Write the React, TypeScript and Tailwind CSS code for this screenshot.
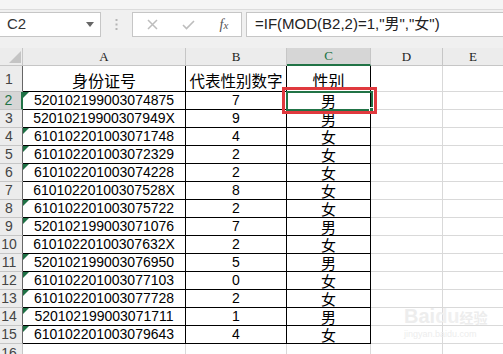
import React from "react";

const rows: [string, number, string, boolean][] = [
  ["520102199003074875", 7, "男", true],
  ["52010219900307949X", 9, "男", false],
  ["610102201003071748", 4, "女", true],
  ["610102201003072329", 2, "女", true],
  ["610102201003074228", 2, "女", true],
  ["61010220100307528X", 8, "女", false],
  ["610102201003075722", 2, "女", true],
  ["520102199003071076", 7, "男", true],
  ["61010220100307632X", 2, "女", false],
  ["520102199003076950", 5, "男", true],
  ["610102201003077103", 0, "女", true],
  ["610102201003077728", 2, "女", true],
  ["520102199003071711", 1, "男", true],
  ["610102201003079643", 4, "女", true],
];

const cjk = { fontFamily: '"Noto Sans CJK SC", sans-serif' };
const serif = { fontFamily: '"Liberation Serif", serif' };
const sans = { fontFamily: '"Liberation Sans", "Noto Sans CJK SC", sans-serif' };

export default function App() {
  return (
    <div className="relative w-[503px] h-[354px] overflow-hidden bg-white select-none">
      {/* toolbar */}
      <div className="h-[48px] bg-[#f0f0f0] flex flex-col">
        <div className="h-[10px] bg-[#f5f5f5] border-b border-[#dcdcdc]"></div>
        <div className="flex items-start pt-[2px] h-[38px]">
          <div className="w-[101px] h-[25px] bg-white border border-l-0 border-[#c6c6c6] flex items-center justify-between pl-[7px] pr-[6px]">
            <span className="text-[15px] text-[#333]" style={sans}>C2</span>
            <svg width="8" height="5" viewBox="0 0 8 5"><path d="M0 0 L8 0 L4 5 Z" fill="#666" /></svg>
          </div>
          <div className="w-[31px] h-[25px] flex items-center justify-center">
            <svg width="3" height="11" viewBox="0 0 3 11">
              <rect x="0.5" y="0" width="2" height="2" fill="#b5b5b5" />
              <rect x="0.5" y="4.5" width="2" height="2" fill="#b5b5b5" />
              <rect x="0.5" y="9" width="2" height="2" fill="#b5b5b5" />
            </svg>
          </div>
          <div className="w-[110px] h-[25px] bg-white border border-[#c6c6c6] flex items-center">
            <div className="w-[37px] flex justify-center pl-[1px]">
              <svg width="11" height="11" viewBox="0 0 11 11"><path d="M1 1 L10 10 M10 1 L1 10" stroke="#bdbdbd" strokeWidth="1.5" /></svg>
            </div>
            <div className="w-[37px] flex justify-center">
              <svg width="13" height="10" viewBox="0 0 13 10"><path d="M1 5 L4.5 8.5 L12 1" stroke="#bdbdbd" strokeWidth="1.6" fill="none" /></svg>
            </div>
            <div className="w-[34px] flex justify-center">
              <span className="text-[14px] italic text-[#555]" style={serif}>f<span className="text-[11px]">x</span></span>
            </div>
          </div>
          <div className="ml-[4px] flex-1 h-[25px] bg-white border border-r-0 border-[#c6c6c6] flex items-center pl-[8px]">
            <span className="text-[15px] text-[#222]" style={sans}>=IF(MOD(B2,2)=1,"男","女")</span>
          </div>
        </div>
      </div>

      {/* column headers */}
      <div className="flex h-[18px] bg-[#ececec] text-[13px] text-[#222]" style={serif}>
        <div className="w-[23px] border-r border-b border-[#c6c6c6] flex items-end justify-end pr-[1px] pb-[2px]">
          <svg width="12" height="12" viewBox="0 0 12 12"><path d="M12 0 L12 12 L0 12 Z" fill="#c4c4c4" /></svg>
        </div>
        <div className="w-[163px] border-r border-b border-[#c6c6c6] flex items-center justify-center">A</div>
        <div className="w-[101px] border-r border-b border-[#c6c6c6] flex items-center justify-center">B</div>
        <div className="w-[84px] border-r border-[#c6c6c6] border-b-2 border-b-[#217346] bg-[#d6d6d6] flex items-center justify-center text-[#217346]">C</div>
        <div className="w-[72px] border-r border-b border-[#c6c6c6] flex items-center justify-center">D</div>
        <div className="flex-1 border-b border-[#c6c6c6] flex items-center justify-center">E</div>
      </div>

      {/* row 1 */}
      <div className="flex h-[26px]">
        <div className="w-[23px] bg-[#ececec] border-r border-r-[#666] border-b border-b-[#c6c6c6] flex items-end justify-center pr-[4px] pb-[1px] text-[14px] text-[#444]" style={sans}>1</div>
        <div className="w-[163px] border-r border-b border-black flex items-end justify-center text-[16px] leading-[22px] text-black" style={cjk}>身份证号</div>
        <div className="w-[101px] border-r border-b border-black flex items-end justify-center text-[15.5px] leading-[22px] text-black" style={cjk}>代表性别数字</div>
        <div className="w-[84px] border-r border-b border-black flex items-end justify-center text-[16px] leading-[22px] text-black" style={cjk}>性别</div>
        <div className="w-[72px] border-r border-b border-[#d9d9d9]"></div>
        <div className="flex-1 border-b border-[#d9d9d9]"></div>
      </div>

      {rows.map((r, i) => {
        const n = i + 2;
        const sel = n === 2;
        return (
          <div key={n} className="flex h-[18px]">
            <div
              className={
                sel
                  ? "w-[23px] bg-[#d6d6d6] border-r-2 border-r-[#217346] border-b border-b-[#c6c6c6] flex items-center justify-center pr-[4px] text-[14px] leading-[17px] text-[#217346]"
                  : "w-[23px] bg-[#ececec] border-r border-r-[#666] border-b border-b-[#c6c6c6] flex items-center justify-center pr-[4px] text-[14px] leading-[17px] text-[#444]"
              }
              style={sans}
            >
              {n}
            </div>
            <div className="relative w-[163px] border-r border-b border-black flex items-center justify-center text-[14px] leading-[17px] text-black" style={sans}>
              {r[3] && (
                <svg className="absolute left-0 top-0" width="6" height="6" viewBox="0 0 6 6"><path d="M0 0 L6 0 L0 6 Z" fill="#1e7145" /></svg>
              )}
              {r[0]}
            </div>
            <div className="w-[101px] border-r border-b border-black flex items-center justify-center text-[14px] leading-[17px] text-black" style={sans}>{r[1]}</div>
            <div className="w-[84px] border-r border-b border-black flex items-center justify-center text-[15px] leading-[17px] text-black" style={cjk}>{r[2]}</div>
            <div className="w-[72px] border-r border-b border-[#d9d9d9]"></div>
            <div className="flex-1 border-b border-[#d9d9d9]"></div>
          </div>
        );
      })}

      {/* row 16 partial */}
      <div className="flex h-[18px]">
        <div className="w-[23px] bg-[#ececec] border-r border-r-[#c6c6c6] flex items-center justify-center pr-[4px] text-[14px] leading-[17px] text-[#444]" style={sans}>16</div>
        <div className="w-[163px] border-r border-[#d9d9d9]"></div>
        <div className="w-[101px] border-r border-[#d9d9d9]"></div>
        <div className="w-[84px] border-r border-[#d9d9d9]"></div>
        <div className="w-[72px] border-r border-[#d9d9d9]"></div>
        <div className="flex-1"></div>
      </div>

      {/* selection overlay */}
      <div className="absolute left-[286px] top-[91px] w-[87px] h-[20px] border-2 border-[#217346]">
        <div className="absolute right-[-3px] bottom-[-3px] w-[5px] h-[5px] bg-[#217346] border border-white"></div>
      </div>
      {/* red highlight box */}
      <div className="absolute left-[282px] top-[87px] w-[95px] h-[27px] border-[3px] border-[#e0393e]"></div>

      {/* watermark */}
      <div className="absolute left-[404px] top-[306px] flex flex-col items-start text-[#ededed] pointer-events-none">
        <span className="text-[20px] font-bold leading-none" style={sans}>Bai<span className="text-[#f0f0f0]">du</span><span className="text-[14px]" style={cjk}>经验</span></span>
        <span className="text-[9px] leading-none mt-[4px]" style={sans}>jingyan.baidu.com</span>
      </div>
    </div>
  );
}
